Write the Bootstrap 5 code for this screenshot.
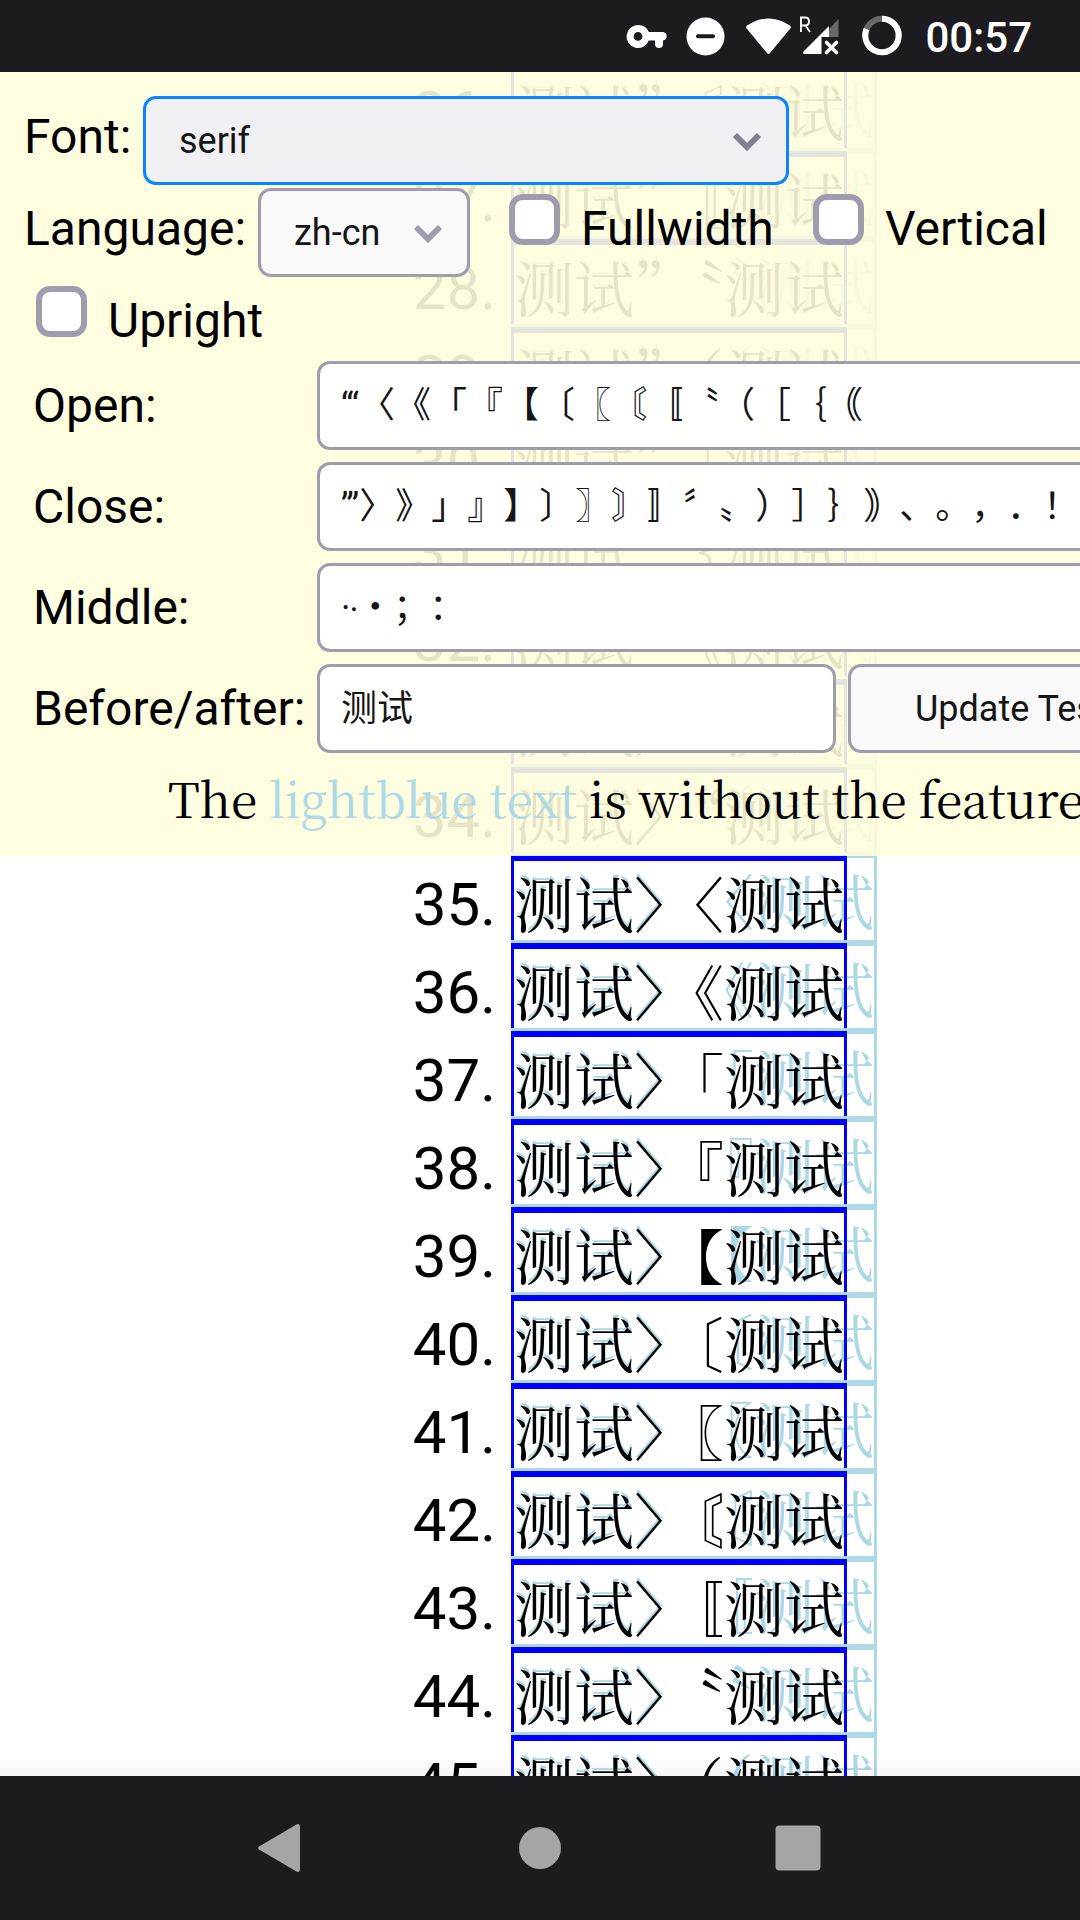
<!DOCTYPE html>
<html lang="zh-CN">
<head>
<meta charset="utf-8">
<title>Text spacing tests</title>
<link href="https://cdn.jsdelivr.net/npm/bootstrap@5.3.0/dist/css/bootstrap.min.css" rel="stylesheet">
<script src="https://cdn.jsdelivr.net/npm/bootstrap@5.3.0/dist/js/bootstrap.bundle.min.js"></script>
<style>
body{width:1080px;height:1920px;font-family:Roboto,"Noto Sans CJK SC",sans-serif;color:#000;background:#fff;text-spacing-trim:space-all}
.sysbar{height:72px;background:#1c1b20;color:#fff}
.clock{font-size:42px;font-weight:500;line-height:75px;margin:0 48px 0 5px}
.navkeys{height:144px;background:#1c1b20}
.viewport-area{min-height:0}
.case-list{margin-top:-9px}
.case{height:88px}
.case-no{width:511px;padding-right:15px;font-size:60px;line-height:88px;padding-top:6px}
.case-box{width:366px;height:88px;font:400 60px/82px "Noto Serif CJK SC","Noto Sans CJK SC",serif;white-space:nowrap}
.plain{border:3px solid lightblue;color:lightblue;height:88px}
.trimmed{left:0;top:0;width:336px;height:85px;border:3px solid blue;border-top-width:6px;border-bottom:0}
.trimmed .opener{margin-left:-.5em}
.controls{left:0;top:0;width:1080px;height:784px;background:rgba(255,253,220,.9);font-size:48px;line-height:56px;white-space:nowrap}
.fld{height:89px;border:3px solid #9f9dad;border-radius:13px;background:#fff;font-size:36px;line-height:85px;padding:0 21px;color:#151515;overflow:hidden}
.pick{background:#f9f9fa;padding:0 24px 0 33px}
.pick span{padding-top:2px}
.pick.active{background:#f0f0f4;border-color:#0a84ff}
.tick{width:51px;height:51px;border:6px solid #9f9dad;border-radius:14px;background:#fff}
.line1{padding:24px 0 0 24px;height:116px}
.line2{padding-left:24px;height:89px}
.line3{padding-left:36px;height:84px}
.lab{padding-top:13px}
.field-row{height:101px;padding-left:33px}
.field-row .lbl{width:284px;padding-top:17px;flex:none}
.go{width:300px;padding-left:64px;background:#f9f9fa}
.note{padding-left:168px;padding-top:3px;font:48px/60px "Noto Serif CJK SC","Noto Serif",serif;letter-spacing:-.28px}
.note .lb{color:lightblue}
.fade-edge{left:0;right:0;bottom:0;height:18px;background:linear-gradient(rgba(0,0,0,0),rgba(0,0,0,.04))}
</style>
</head>
<body class="d-flex flex-column overflow-hidden">
<div class="sysbar d-flex justify-content-end flex-shrink-0">
<svg width="300" height="72" viewBox="620 0 300 72" fill="#fff">
<path fill-rule="evenodd" d="M638 25a11.5 11.5 0 1 0 10.800 15.500H655V44a3.500 3.500 0 0 0 8 0V40.500a4.300 4.300 0 0 0 0-8.500H648.800A11.500 11.500 0 0 0 638 25zM638 32a4.400 4.400 0 1 1 0 8.800 4.400 4.400 0 0 1 0-8.800z"/>
<circle cx="705.500" cy="36.500" r="19"/><path d="M698 36.300h15" stroke="#1c1b20" stroke-width="4" stroke-linecap="round"/>
<path d="M747 25.500Q768.500 11.500 790 25.500Q791.500 27 790.300 28.500L770 53Q768.500 55 767 53L746.700 28.500Q745.500 27 747 25.500z"/>
<path d="M801 32V17.500h4q4 0 4 4t-4 4h-4m4.500 0L810 32" fill="none" stroke="#fff" stroke-width="1.900"/>
<path d="M829 29L838.500 19V37H829z" fill="#68676b"/><path d="M829 26V37H821.500V54H804q-2-1 0-3z"/>
<path d="M826.500 42.500l10 10m0-10l-10 10" stroke="#fff" stroke-width="3.600" stroke-linecap="round"/>
<circle cx="882" cy="35.500" r="16.700" fill="none" stroke="#68676b" stroke-width="6"/>
<path d="M882 18.800A16.700 16.700 0 1 1 866.600 29" fill="none" stroke="#fff" stroke-width="6"/>
</svg>
<span class="clock">00:57</span>
</div>
<main class="viewport-area position-relative flex-grow-1 overflow-hidden">
<div class="case-list" id="cases"></div>
<section class="controls position-absolute overflow-hidden">
<div class="line1 d-flex"><span class="lab" style="width:119px">Font:</span>
<div class="fld pick active d-flex justify-content-between align-items-center" style="width:646px"><span>serif</span><svg width="30" height="20" viewBox="0 0 30 20" fill="none" stroke="#82808f" stroke-width="6"><path d="M3 4l12 12L27 4"/></svg></div></div>
<div class="line2 d-flex"><span class="lab" style="width:234px">Language:</span>
<div class="fld pick d-flex justify-content-between align-items-center" style="width:212px"><span>zh-cn</span><svg width="30" height="20" viewBox="0 0 30 20" fill="none" stroke="#9f9dad" stroke-width="6"><path d="M3 4l12 12L27 4"/></svg></div>
<i class="tick" style="margin:6px 21px 0 39px"></i><span class="lab" style="width:232px">Fullwidth</span><i class="tick" style="margin:6px 21px 0 0"></i><span class="lab">Vertical</span></div>
<div class="line3 d-flex"><i class="tick" style="margin:9px 21px 0 0"></i><span style="padding-top:16px">Upright</span></div>
<div class="field-row d-flex"><span class="lbl">Open:</span><div class="fld flex-shrink-0" style="width:900px">‘“〈《「『【〔〖〘〚〝（［｛｟</div></div>
<div class="field-row d-flex"><span class="lbl">Close:</span><div class="fld flex-shrink-0" style="width:900px">’”〉》」』】〕〗〙〛〞〟）］｝｠、。，．！</div></div>
<div class="field-row d-flex"><span class="lbl">Middle:</span><div class="fld flex-shrink-0" style="width:900px">·‧・；：</div></div>
<div class="field-row d-flex"><span class="lbl">Before/after:</span><div class="fld flex-shrink-0" style="width:519px;margin-right:12px">测试</div><div class="fld go flex-shrink-0">Update Tests</div></div>
<div class="note">The <span class="lb">lightblue text</span> is without the feature</div>
</section>
<div class="fade-edge position-absolute"></div>
</main>
<div class="navkeys flex-shrink-0"><svg width="1080" height="144" fill="#a5a4a6"><path d="M259 70.500L296.500 48.500Q300 47 300 51V93Q300 97 296.500 95.500L259 73.500Q257 72 259 70.500z"/><circle cx="540" cy="72" r="21"/><rect x="775.500" y="49.500" width="45" height="45" rx="4"/></svg></div>
<script>
const pairs=["”〘","”〚","”〝","”（","”［","”｛","”｟","〉‘","〉“","〉〈","〉《","〉「","〉『","〉【","〉〔","〉〖","〉〘","〉〚","〉〝","〉（"];
document.getElementById("cases").innerHTML=pairs.map((p,i)=>`<div class="case d-flex"><div class="case-no text-end">${26+i}.</div><div class="case-box position-relative"><div class="plain">测试${p}测试</div><div class="trimmed position-absolute">测试${p[0]}<span class="opener">${p[1]}</span>测试</div></div></div>`).join("");
</script>
</body>
</html>
